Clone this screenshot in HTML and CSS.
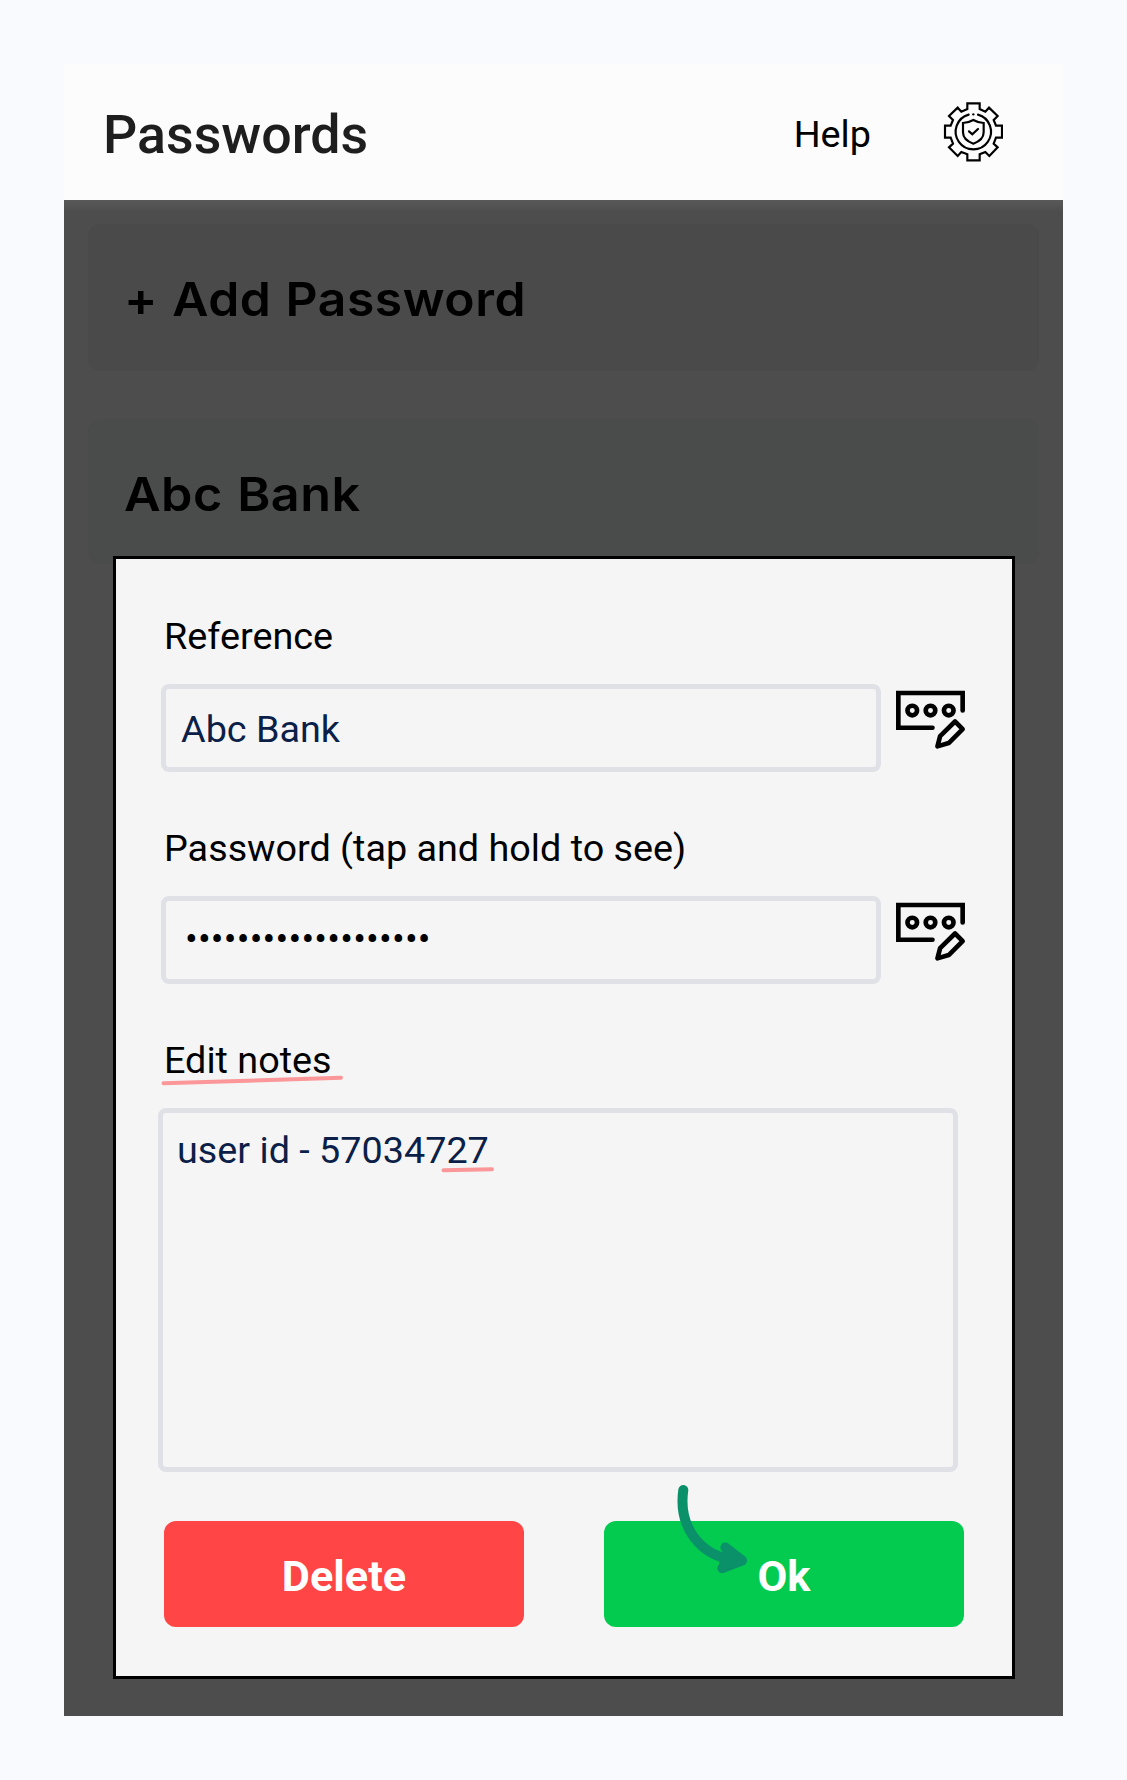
FILE: index.html
```html
<!DOCTYPE html>
<html lang="en">
<head>
<meta charset="utf-8">
<title>Passwords</title>
<link rel="stylesheet" href="styles.css">
</head>
<body>
<svg class="sprite" aria-hidden="true">
  <symbol id="edit" viewBox="102 88 218 184">
    <g fill="none" stroke="#000" stroke-width="14" stroke-linecap="round" stroke-linejoin="round">
      <path d="M308 153V100H114V205H217" stroke-linejoin="miter"/>
      <circle cx="156" cy="153" r="14.5"/><circle cx="211" cy="153" r="14.5"/><circle cx="266" cy="153" r="14.5"/>
      <path d="M285 186L308 209L266 251L232 261L240 230Z"/>
    </g>
  </symbol>
</svg>
<main class="app">
  <header class="topbar">
    <h1 class="title">Passwords</h1>
    <a class="help">Help</a>
    <svg class="gear" viewBox="-91 -89 180 180" fill="none" stroke="#000" stroke-width="6.500">
      <path d="M-18-85H19V-68L36-60L47-72L73-47L61-35L68-18H86V18H68L61 36L73 47L48 73L36 61L19 68V86H-18V68L-36 61L-47 73L-73 47L-61 36L-68 18H-85V-18H-68L-61-35L-73-47L-47-72L-36-60L-18-68Z"/>
      <path d="M14-51A53 53 0 1 1-14-51" stroke-linecap="round"/>
      <circle cx="0" cy="-52" r="3.5" fill="#000" stroke="none"/>
      <path d="M0-35Q14-27 31-26V2C31 18 20 29 0 36C-20 29-31 18-31 2V-26Q-14-27 0-35Z"/>
      <path d="M-13-1L-3 8L14-8" stroke-linecap="round"/>
    </svg>
  </header>
  <section class="list">
    <div class="card"><span class="name">+ Add Password</span></div>
    <div class="card bank"><span class="name">Abc Bank</span></div>
  </section>
  <form class="dialog">
    <div class="field">
      <label class="label">Reference</label>
      <div class="row"><div class="input">Abc Bank</div><svg class="edit"><use href="#edit"/></svg></div>
    </div>
    <div class="field">
      <label class="label">Password (tap and hold to see)</label>
      <div class="row"><div class="input secret">•••••••••••••••••••</div><svg class="edit"><use href="#edit"/></svg></div>
    </div>
    <div class="field">
      <label class="label">Edit notes</label>
      <div class="notes">user id - 57034727</div>
    </div>
    <div class="actions">
      <div class="button delete">Delete</div>
      <div class="button ok">Ok</div>
    </div>
  </form>
  <svg class="marks" viewBox="64 64 999 1652" fill="none" stroke-linecap="round" stroke-linejoin="round">
    <path class="underline" d="M163.500 1083.300L341 1077.700M443.500 1170.300L492 1169.300"/>
    <path class="arrow" d="M683.300 1490C678 1527 700 1554 731 1559.500M725.300 1547.500L742 1560.500L722.300 1568.200M727 1554L742 1560.500L724 1563"/>
  </svg>
</main>
</body>
</html>
```
FILE: styles.css
```css
* { box-sizing: border-box; }
body {
  margin: 0;
  padding: 64px;
  background: #f9fafd;
  font-family: Roboto, "Liberation Sans", sans-serif;
  font-size: 37.75px;
  color: #000;
}
.sprite { display: none; }
.app { position: relative; width: 999px; height: 1652px; background: #4d4d4d; }

.topbar {
  display: flex;
  align-items: center;
  height: 136px;
  padding: 0 60px 0 39px;
  background: #fcfcfc;
}
.title { flex: 1; margin: 0; padding-top: 5px; font-size: 53.75px; font-weight: 500; color: #1e1e1e; }
.help { margin-right: 72px; padding-top: 4px; }
.gear { width: 60px; height: 60px; }

.list {
  display: flex;
  flex-direction: column;
  gap: 48px;
  padding: 24px;
  background: linear-gradient(#595959, #4d4d4d 12px);
}
.card {
  display: flex;
  align-items: center;
  height: 147px;
  padding: 2px 36px 0;
  border-radius: 12px;
  background: #4a4a4a;
  font: 600 47px Inter, "Open Sans", sans-serif;
}
/* Widened letterforms, anchored at the card's left padding */
.name { letter-spacing: 0.5px; word-spacing: 1px; transform: scaleX(1.06); transform-origin: left; }
.bank { height: 145px; padding-top: 4px; background: #4a4c4b; }
.bank .name { transform: scaleX(1.07); }

.dialog {
  position: absolute;
  top: 492px;
  left: 49px;
  display: flex;
  flex-direction: column;
  gap: 52px;
  width: 902px;
  height: 1123px;
  padding: 53px 48px 0;
  border: 3px solid #000;
  background: #f5f5f5;
}
.field { display: flex; flex-direction: column; gap: 24px; }
.label { height: 48px; line-height: 48px; }
.row { display: flex; gap: 13px; margin-left: -3px; }
.input, .notes { flex: none; border: 5px solid #e0e1e7; border-radius: 8px; color: #0b1f48; }
.input { width: 720px; height: 88px; padding: 16px 15px 0; line-height: 48px; }
.secret { padding: 14px 19px 0; color: #000; letter-spacing: 0.2px; }
.edit { flex: none; width: 73px; height: 61px; margin-top: 5px; }
.notes { width: 800px; height: 364px; margin-left: -6px; padding: 13px 14px; line-height: 48px; }
.actions { display: flex; justify-content: space-between; margin-top: -3px; }
.button {
  display: flex;
  align-items: center;
  justify-content: center;
  width: 360px;
  height: 106px;
  padding-top: 4px;
  border-radius: 12px;
  color: #fff;
  font-size: 43.25px;
  font-weight: 700;
}
.delete { background: #ff4545; }
.ok { background: #03cb50; }

.marks { position: absolute; inset: 0; width: 999px; height: 1652px; }
.underline { stroke: #fb9799; stroke-width: 4; }
.arrow { stroke: #0a9169; stroke-width: 10; }
```
